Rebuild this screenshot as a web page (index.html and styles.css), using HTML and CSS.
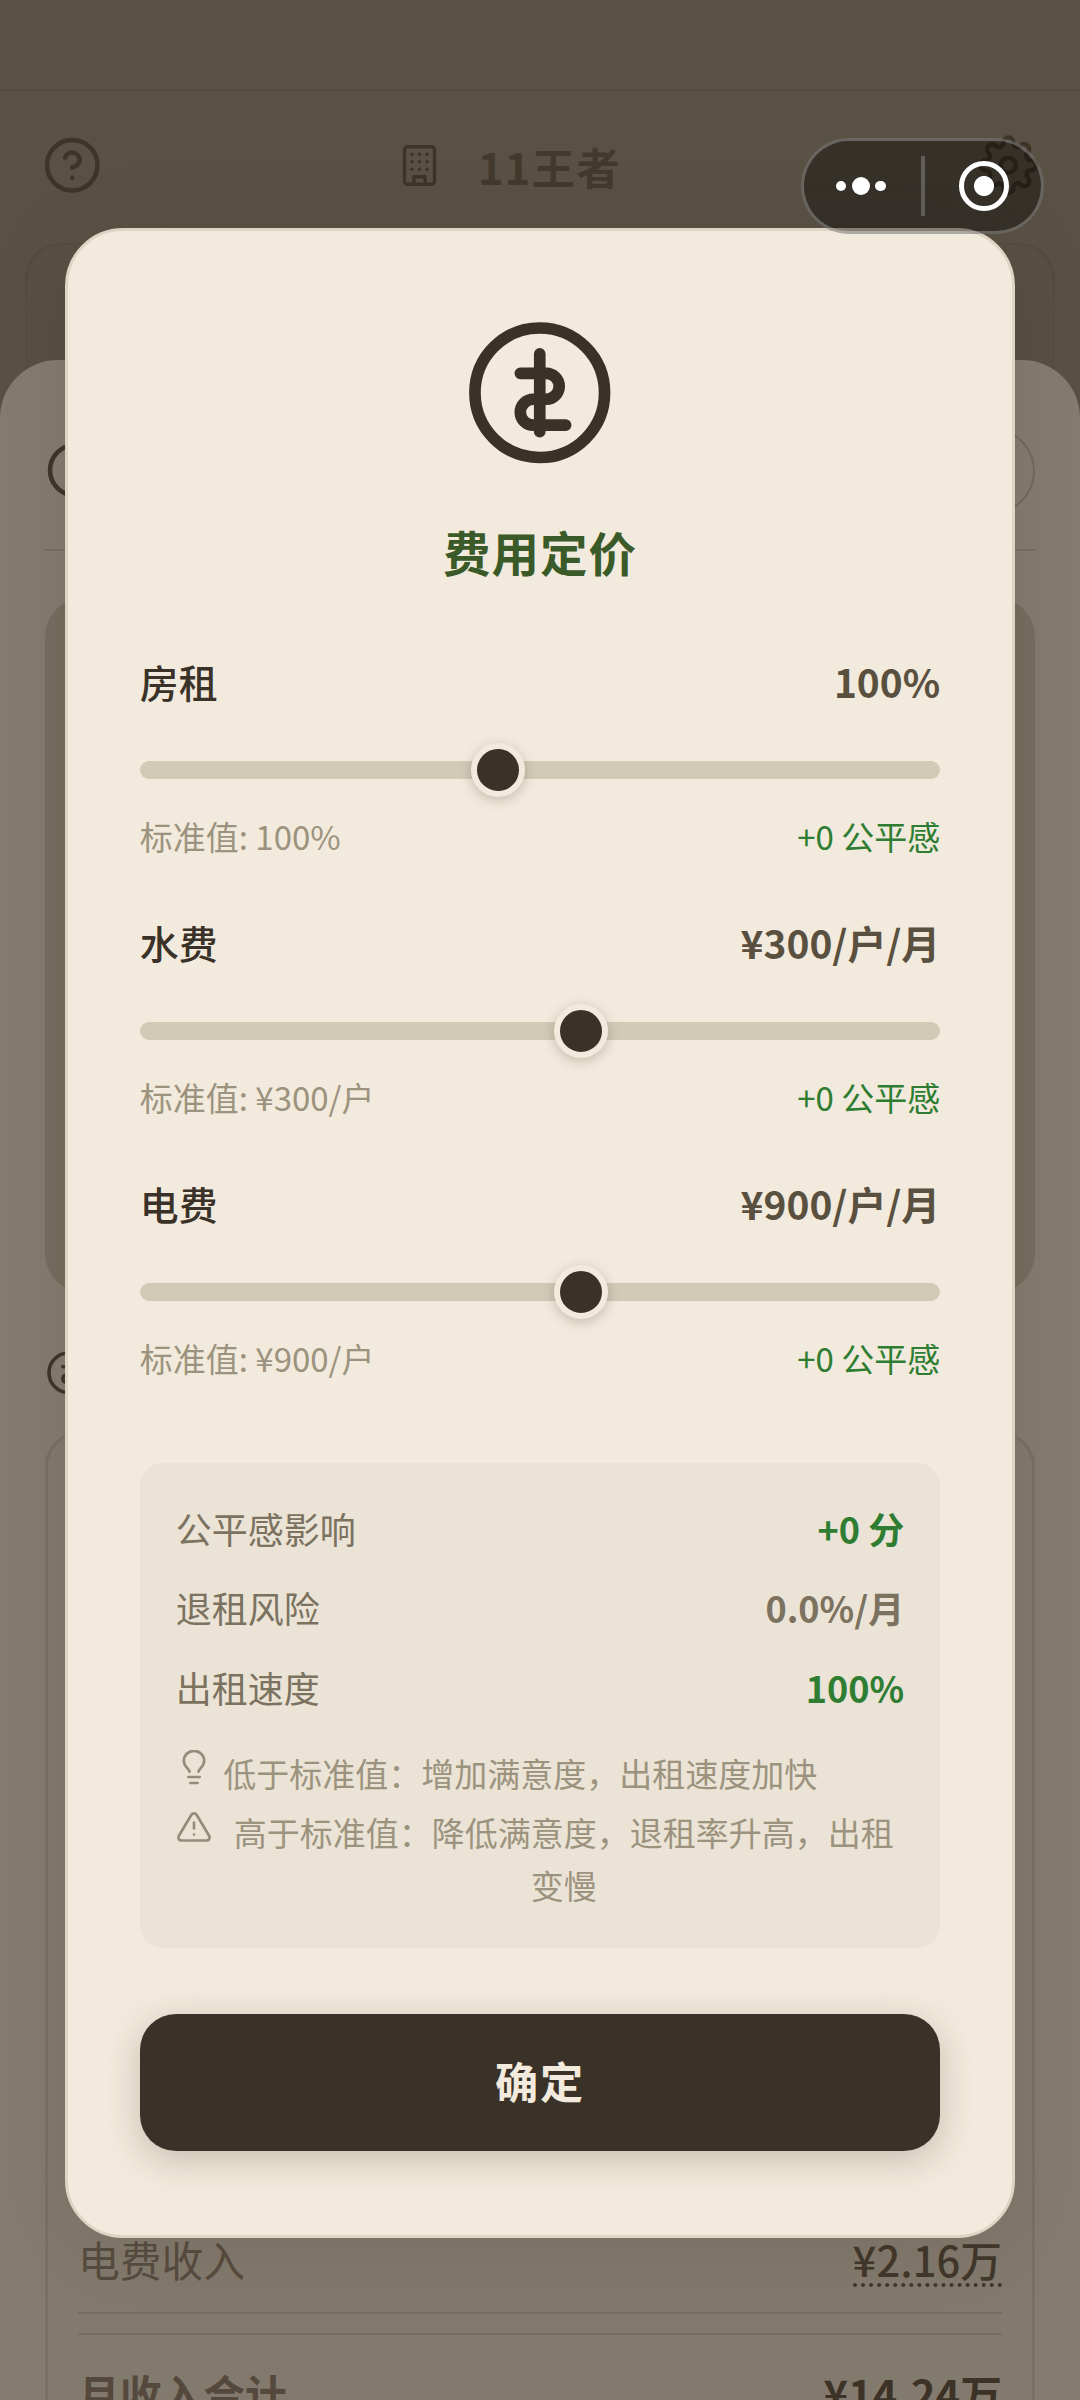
FILE: index.html
```html
<!DOCTYPE html>
<html lang="zh-CN">
<head>
<meta charset="utf-8">
<title>费用定价</title>
<link rel="stylesheet" href="styles.css">
</head>
<body>
<svg class="defs" aria-hidden="true">
  <symbol id="coin" viewBox="0 0 24 24"><circle cx="12" cy="12" r="10"/><path d="M12 6v12M9 9h4a2 2 0 0 1 0 4h-2a2 2 0 0 0 0 4h5"/></symbol>
  <symbol id="help" viewBox="0 0 24 24"><circle cx="12" cy="12" r="10"/><path d="M9.09 9a3 3 0 0 1 5.83 1c0 2-3 3-3 3M12 17h.01"/></symbol>
  <symbol id="building" viewBox="0 0 24 24"><rect x="4" y="2" width="16" height="20" rx="1.6"/><path d="M9 22v-4h6v4M8 6h.01M12 6h.01M16 6h.01M8 10h.01M12 10h.01M16 10h.01M8 14h.01M12 14h.01M16 14h.01"/></symbol>
  <symbol id="gear" viewBox="0 0 24 24"><circle cx="12" cy="12" r="3"/><path d="M19.4 15a1.65 1.65 0 0 0 .33 1.82l.06.06a2 2 0 0 1-2.83 2.83l-.06-.06a1.65 1.65 0 0 0-1.82-.33 1.65 1.65 0 0 0-1 1.51V21a2 2 0 0 1-4 0v-.09A1.65 1.65 0 0 0 9 19.4a1.65 1.65 0 0 0-1.82.33l-.06.06a2 2 0 0 1-2.83-2.83l.06-.06a1.65 1.65 0 0 0 .33-1.82 1.65 1.65 0 0 0-1.51-1H3a2 2 0 0 1 0-4h.09A1.65 1.65 0 0 0 4.6 9a1.65 1.65 0 0 0-.33-1.82l-.06-.06a2 2 0 0 1 2.83-2.83l.06.06a1.65 1.65 0 0 0 1.82.33H9a1.65 1.65 0 0 0 1-1.51V3a2 2 0 0 1 4 0v.09a1.65 1.65 0 0 0 1 1.51 1.65 1.65 0 0 0 1.82-.33l.06-.06a2 2 0 0 1 2.83 2.83l-.06.06a1.65 1.65 0 0 0-.33 1.82V9a1.65 1.65 0 0 0 1.51 1H21a2 2 0 0 1 0 4h-.09a1.65 1.65 0 0 0-1.51 1z"/></symbol>
  <symbol id="bulb" viewBox="0 0 24 24"><path d="M9 14.4c-.2-1.8-3.8-3.3-3.8-7.2a6.8 6.6 0 0 1 13.6 0c0 3.9-3.6 5.4-3.8 7.2M8.2 18h7.6M9.6 22h4.8"/></symbol>
  <symbol id="warn" viewBox="0 0 24 24"><path d="M10.29 3.86 1.82 18a2 2 0 0 0 1.71 3h16.94a2 2 0 0 0 1.71-3L13.71 3.86a2 2 0 0 0-3.42 0zM12 9v4M12 17h.01"/></symbol>
</svg>

<div class="app">
  <div class="status-bar"></div>
  <header class="topbar">
    <svg class="icon icon-60"><use href="#help"/></svg>
    <div class="building-name">
      <svg class="icon icon-45"><use href="#building"/></svg>
      <span>11王者</span>
    </div>
    <svg class="icon icon-60"><use href="#gear"/></svg>
  </header>
  <div class="summary-card"></div>
  <main class="sheet">
    <div class="sheet-head">
      <svg class="icon icon-60"><use href="#help"/></svg>
      <span class="pill"></span>
    </div>
    <div class="hero-card"></div>
    <div class="section-head"><svg class="icon icon-48"><use href="#coin"/></svg></div>
    <section class="income-card">
      <div class="income-row"><span>电费收入</span><span class="amount">¥2.16万</span></div>
      <div class="income-total"><span>月收入合计</span><span class="total">¥14.24万</span></div>
    </section>
  </main>
</div>

<div class="overlay">
  <div class="modal">
    <svg class="icon modal-icon"><use href="#coin"/></svg>
    <h1 class="modal-title">费用定价</h1>

    <div class="fee">
      <div class="fee-head"><span>房租</span><b>100%</b></div>
      <div class="slider"><i class="thumb" style="margin-left:44.44%"></i></div>
      <div class="fee-note"><span>标准值: 100%</span><span class="good">+0 公平感</span></div>
    </div>
    <div class="fee">
      <div class="fee-head"><span>水费</span><b>¥300/户/月</b></div>
      <div class="slider"><i class="thumb" style="margin-left:55.56%"></i></div>
      <div class="fee-note"><span>标准值: ¥300/户</span><span class="good">+0 公平感</span></div>
    </div>
    <div class="fee">
      <div class="fee-head"><span>电费</span><b>¥900/户/月</b></div>
      <div class="slider"><i class="thumb" style="margin-left:55.56%"></i></div>
      <div class="fee-note"><span>标准值: ¥900/户</span><span class="good">+0 公平感</span></div>
    </div>

    <div class="effects">
      <div class="effect"><span>公平感影响</span><b class="good">+0 分</b></div>
      <div class="effect"><span>退租风险</span><b>0.0%/月</b></div>
      <div class="effect"><span>出租速度</span><b class="good">100%</b></div>
      <div class="hints">
        <div class="hint"><svg class="icon icon-36"><use href="#bulb"/></svg><span>低于标准值：增加满意度，出租速度加快</span></div>
        <div class="hint"><svg class="icon icon-36"><use href="#warn"/></svg><span>高于标准值：降低满意度，退租率升高，出租变慢</span></div>
      </div>
    </div>

    <button class="confirm">确定</button>
  </div>
</div>

<div class="capsule">
  <div class="capsule-half capsule-menu"><i class="dot"></i><i class="dot dot-big"></i><i class="dot"></i></div>
  <i class="capsule-line"></i>
  <div class="capsule-half capsule-close"><i class="ring"></i></div>
</div>
</body>
</html>
```
FILE: styles.css
```css
* { box-sizing: border-box; }
body {
  margin: 0;
  width: 1080px;
  height: 2400px;
  position: relative;
  overflow: hidden;
  background: #5a5145;
  font-family: "Noto Sans CJK SC", "Noto Sans", sans-serif;
  color: #3a3128;
}
.defs { position: absolute; width: 0; height: 0; }
.icon {
  display: block;
  flex: none;
  fill: none;
  stroke: #3e3428;
  stroke-width: 1.8;
  stroke-linecap: round;
  stroke-linejoin: round;
}
.icon-60 { width: 60.5px; height: 60.5px; }
.icon-48 { width: 47.5px; height: 47.5px; }
.icon-45 { width: 45px; height: 45px; }
.icon-36 { width: 36px; height: 36px; stroke: #958c7a; margin-top: 3.5px; }

/* page behind the dialog */
.app { height: 2400px; overflow: hidden; display: flex; flex-direction: column; }
.status-bar { flex: none; height: 91px; background: #5a5145; border-bottom: 2px solid #564c40; }
.topbar {
  flex: none;
  height: 149px;
  padding: 0 41.6px;
  display: flex;
  align-items: center;
  justify-content: space-between;
}
.building-name { display: flex; align-items: center; gap: 36px; padding-right: 62px; }
.building-name span {
  font-size: 43.2px;
  line-height: 60px;
  font-weight: 700;
  letter-spacing: 1.44px;
  color: #43392d;
}
.summary-card {
  flex: none;
  margin: 3px 25px 0;
  height: 160px;
  border: 2px solid #554b3f;
  border-radius: 36px;
  background: #594f43;
}
.sheet {
  flex: 1;
  position: relative;
  margin-top: -43px;
  padding: 0 45px;
  border-radius: 58px 58px 0 0;
  background: #857c70;
}
.sheet-head {
  height: 191px;
  padding-top: 32px;
  display: flex;
  align-items: center;
  justify-content: space-between;
  border-bottom: 2px solid #786f62;
}
.pill { width: 160px; height: 86px; border: 2px solid #736a5d; border-radius: 43px; }
.hero-card { margin-top: 46px; height: 696px; border-radius: 40px; background: #776d60; }
.section-head { padding: 56px 0 0; height: 138px; }
.income-card {
  height: 1100px;
  padding: 789px 30px 0;
  border: 3px solid #7a7164;
  border-radius: 36px;
  background: #837a6e;
}
.income-row, .income-total { display: flex; justify-content: space-between; font-size: 41.76px; }
.income-row { height: 91px; line-height: 60px; padding-top: 6px; color: #574c3f; border-bottom: 2px solid #776e61; }
.income-row .amount { height: 58px; font-weight: 500; color: #41372b; border-bottom: 4.32px dotted #41372b; }
.income-total {
  margin-top: 19px;
  padding-top: 28px;
  line-height: 60px;
  font-weight: 700;
  color: #54493c;
  border-top: 2px solid #776e61;
}
.income-total .total { color: #3c3226; }

/* dialog */
.overlay { position: absolute; inset: 0; display: flex; justify-content: center; align-items: flex-start; padding-top: 228px; }
.modal {
  width: 950.4px;
  height: 2010px;
  padding: 83.6px 72px 0;
  border: 3px solid #ded5c4;
  border-radius: 58px;
  background: #f2eadc;
  box-shadow: 0 12px 86px rgba(60, 48, 28, 0.14);
}
.modal-icon { width: 155.5px; height: 155.5px; margin: 0 auto; stroke: #3a3128; }
.modal-title {
  margin: 51.6px 0 71.3px;
  text-align: center;
  font-size: 47.5px;
  line-height: 60px;
  font-weight: 700;
  letter-spacing: 1px;
  color: #3b5a29;
}
.fee { height: 261.2px; }
.fee-head, .fee-note, .effect { display: flex; justify-content: space-between; }
.fee-head { font-size: 38.88px; line-height: 56px; font-weight: 500; }
.fee-head b { font-weight: 700; color: #5a5040; }
.slider { height: 18px; margin: 52px 0 33px; padding-right: 54px; border-radius: 9px; background: #d2c9b7; }
.thumb {
  display: block;
  width: 54px;
  height: 54px;
  position: relative;
  top: -18px;
  border: 6px solid #f2eadc;
  border-radius: 50%;
  background: #3a3128;
  box-shadow: 0 3px 12px rgba(60, 50, 35, 0.25);
}
.fee-note { font-size: 33px; line-height: 48px; color: #9c937f; }
.good, .effect .good { color: #2e7d32; }
.effects {
  margin-top: 26px;
  height: 485.5px;
  padding: 39.5px 36px 0;
  border-radius: 23px;
  background: #ebe3d5;
}
.effect { height: 79.3px; font-size: 36px; line-height: 52px; color: #7b7260; }
.effect b { font-weight: 700; color: #7b7260; }
.hints { padding-top: 6.6px; display: flex; flex-direction: column; gap: 6px; font-size: 33px; line-height: 53px; color: #9c937f; }
.hint { display: flex; align-items: flex-start; gap: 11.5px; text-align: center; }
.confirm {
  display: block;
  width: 100%;
  height: 137.3px;
  margin-top: 66px;
  padding: 0 0 5px;
  border: 0;
  border-radius: 36px;
  background: #3a3128;
  box-shadow: 0 9px 35px rgba(60, 50, 35, 0.24);
  font: 700 43.2px/60px "Noto Sans CJK SC", "Noto Sans", sans-serif;
  letter-spacing: 1.8px;
  color: #f2eadc;
}

/* host app capsule, floats above everything */
.capsule {
  position: absolute;
  left: 801px;
  top: 138px;
  width: 243px;
  height: 96px;
  display: flex;
  align-items: center;
  border: 3px solid rgba(255, 255, 255, 0.25);
  border-radius: 48px;
  background: rgba(0, 0, 0, 0.4);
}
.capsule-half { flex: 1; display: flex; align-items: center; justify-content: center; gap: 5.5px; }
.capsule-menu { padding-right: 4px; }
.capsule-close { padding-left: 3px; }
.capsule-line { width: 3.5px; height: 60px; background: rgba(255, 255, 255, 0.22); }
.dot { width: 10.6px; height: 10.6px; border-radius: 50%; background: #fff; }
.dot-big { width: 18px; height: 18px; }
.ring {
  width: 50px;
  height: 50px;
  border: 5.3px solid #fff;
  border-radius: 50%;
  background: radial-gradient(circle, #fff 9.6px, transparent 10.4px);
}
```
